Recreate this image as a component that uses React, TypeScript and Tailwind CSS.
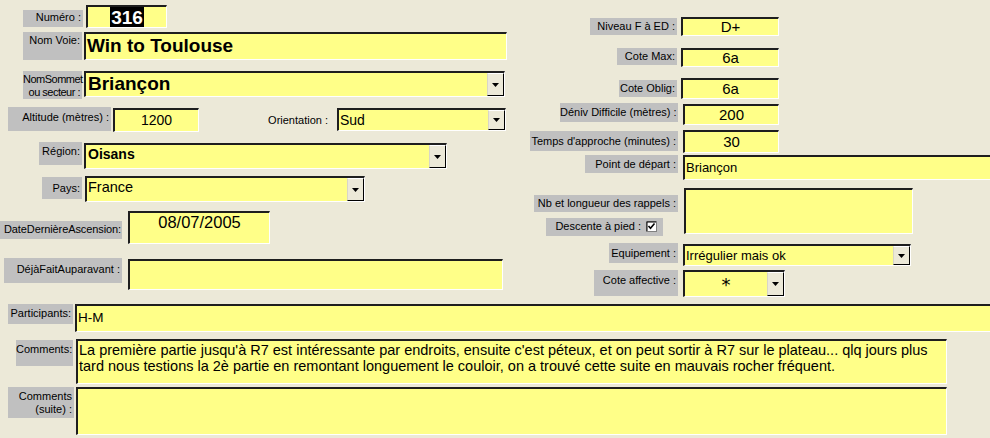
import type { ReactNode } from "react";

type BoxProps = { className?: string; children?: ReactNode };

// libellé gris façon formulaire Access
function Label({ className = "", children }: BoxProps) {
  return (
    <div
      className={`shrink-0 bg-[#c0c0c0] pr-[2px] pt-[2px] text-right text-[11px] leading-[13px] whitespace-nowrap ${className}`}
    >
      {children}
    </div>
  );
}

// zone de saisie jaune, bord enfoncé
function Field({ className = "", children }: BoxProps) {
  return (
    <div
      className={`flex shrink-0 overflow-hidden whitespace-nowrap border-t-2 border-l-2 border-b border-r border-t-[#1e1e1e] border-l-[#1e1e1e] border-b-white border-r-white bg-[#ffff88] ${className}`}
    >
      {children}
    </div>
  );
}

function DropButton() {
  return (
    <div className="ml-auto flex w-[17px] shrink-0 items-center justify-center self-stretch border border-t-white border-l-[#d8d5c8] border-r-black border-b-black bg-[#ece9d8]">
      <svg width="7" height="4" viewBox="0 0 7 4">
        <path d="M0 0h7L3.5 4z" fill="#000" />
      </svg>
    </div>
  );
}

function CheckBox() {
  return (
    <svg width="11" height="11" viewBox="0 0 11 11" className="ml-[5px] mt-[1px] shrink-0">
      <rect x="0.5" y="0.5" width="10" height="10" fill="#fff" stroke="#808080" />
      <path d="M1 1h9M1 1v9" stroke="#000" />
      <path d="M2.5 5l2 2.2L8.5 2.5" stroke="#000" strokeWidth="1.6" fill="none" />
    </svg>
  );
}

export default function App() {
  return (
    <div className="relative h-[438px] w-[990px] overflow-hidden bg-[#ece9d8] font-['Liberation_Sans',Arial,sans-serif] text-black">
      <div className="flex items-start">
        {/* Colonne gauche */}
        <div className="w-[520px] shrink-0 pt-[5px]">
          <div className="flex h-[27px] items-start">
            <Label className="ml-[23px] mt-[5px] h-[17px] w-[60px] !pt-[1px]">Numéro :</Label>
            <Field className="ml-[3px] h-[23px] w-[81px] items-center justify-center">
              <span className="bg-black px-[1px] text-[19px] font-bold leading-[21px] text-white">316</span>
            </Field>
          </div>

          <div className="flex h-[39px] items-start">
            <Label className="ml-[23px] h-[28px] w-[59px] pr-0">Nom Voie:</Label>
            <Field className="ml-[2px] h-[28px] w-[423px] items-center pl-[1px] text-[19px] font-bold">
              Win to Toulouse
            </Field>
          </div>

          <div className="flex h-[36px] items-start">
            <Label className="ml-[23px] h-[28px] w-[59px] text-[10px] leading-[12px] tracking-[-0.5px]">
              NomSommet
              <br />
              ou secteur :
            </Label>
            <Field className="ml-[2px] h-[26px] w-[421px] items-center pl-[2px] text-[19px] font-bold">
              <span>Briançon</span>
              <DropButton />
            </Field>
          </div>

          <div className="flex h-[35px] items-start">
            <Label className="ml-[8px] h-[24px] w-[103px] !pt-[4px]">Altitude (mètres) :</Label>
            <Field className="ml-[2px] mt-[1px] h-[24px] w-[86px] items-center justify-center text-[14px]">
              1200
            </Field>
            <div className="w-[138px] shrink-0 pr-[9px] pt-[7px] text-right text-[11px] leading-[13px]">
              Orientation :
            </div>
            <Field className="mt-[1px] h-[23px] w-[169px] items-center pl-[1px] text-[14px]">
              <span>Sud</span>
              <DropButton />
            </Field>
          </div>

          <div className="flex h-[34px] items-start">
            <Label className="ml-[39px] h-[23px] w-[43px] !pt-[3px]">Région:</Label>
            <Field className="ml-[2px] mt-[1px] h-[26px] w-[363px] pl-[2px] text-[14px] font-bold leading-[17px]">
              <span className="pt-[1px]">Oisans</span>
              <DropButton />
            </Field>
          </div>

          <div className="flex h-[35px] items-start">
            <Label className="ml-[42px] mt-[1px] h-[22px] w-[40px] !pt-[5px]">Pays:</Label>
            <Field className="ml-[3px] h-[26px] w-[280px] pl-[1px] text-[14.5px] leading-[17px]">
              <span className="pt-[1px]">France</span>
              <DropButton />
            </Field>
          </div>

          <div className="flex h-[47px] items-start">
            <Label className="mt-[10px] h-[18px] w-[122px] !pr-[1px] tracking-[-0.1px]">DateDernièreAscension:</Label>
            <Field className="ml-[6px] h-[33px] w-[142px] justify-center text-[16.5px] leading-[19px]">
              08/07/2005
            </Field>
          </div>

          <div className="flex h-[46px] items-start">
            <Label className="ml-[4px] h-[25px] w-[118px] !pt-[5px]">DéjàFaitAuparavant :</Label>
            <Field className="ml-[6px] mt-[1px] h-[31px] w-[375px]" />
          </div>
        </div>

        {/* Colonne droite */}
        <div className="flex-1 pt-[17px]">
          <div className="flex h-[31px] items-start">
            <Label className="ml-[70px] mt-[1px] h-[17px] w-[87px]">Niveau F à ED :</Label>
            <Field className="ml-[4px] h-[19px] w-[98px] items-center justify-center text-[15px]">D+</Field>
          </div>

          <div className="flex h-[30px] items-start">
            <Label className="ml-[97px] h-[17px] w-[60px]">Cote Max:</Label>
            <Field className="ml-[4px] h-[19px] w-[98px] items-center justify-center text-[15px]">6a</Field>
          </div>

          <div className="flex h-[25px] items-start">
            <Label className="ml-[99px] mt-[2px] h-[17px] w-[58px]">Cote Oblig:</Label>
            <Field className="ml-[4px] h-[21px] w-[98px] items-center justify-center text-[15px]">6a</Field>
          </div>

          <div className="flex h-[27px] items-start">
            <Label className="ml-[40px] h-[19px] w-[118px] !pt-[3px]">Déniv Difficile (mètres) :</Label>
            <Field className="ml-[5px] mt-[1px] h-[21px] w-[96px] items-center justify-center text-[15px]">200</Field>
          </div>

          <div className="flex h-[25px] items-start">
            <Label className="ml-[10px] mt-[1px] h-[20px] w-[148px] !pt-[4px]">Temps d'approche (minutes) :</Label>
            <Field className="ml-[5px] h-[23px] w-[96px] items-center justify-center text-[15px]">30</Field>
          </div>

          <div className="flex h-[33px] items-start">
            <Label className="ml-[65px] h-[18px] w-[93px] !pt-[3px]">Point de départ :</Label>
            <Field className="ml-[5px] h-[25px] w-[330px] items-center pl-[1px] text-[13px]">Briançon</Field>
          </div>

          <div className="flex h-[55px] items-start">
            <div className="w-[158px] shrink-0">
              <Label className="ml-[14px] mt-[7px] h-[17px] w-[144px]">Nb et longueur des rappels :</Label>
              <Label className="ml-[26px] mt-[6px] flex h-[18px] w-[117px] items-start justify-end !pr-[6px]">
                <span>Descente à pied :</span>
                <CheckBox />
              </Label>
            </div>
            <Field className="ml-[6px] h-[46px] w-[229px]" />
          </div>

          <div className="flex h-[27px] items-start">
            <Label className="ml-[89px] h-[20px] w-[69px] !pt-[4px]">Equipement :</Label>
            <Field className="ml-[5px] mt-[1px] h-[22px] w-[228px] items-center pl-[1px] text-[13px]">
              <span>Irrégulier mais ok</span>
              <DropButton />
            </Field>
          </div>

          <div className="flex h-[34px] items-start">
            <Label className="ml-[74px] h-[26px] w-[84px] !pt-[4px]">Cote affective :</Label>
            <Field className="ml-[5px] h-[27px] w-[102px] items-center text-[18px]">
              <span className="flex-1 text-center font-['DejaVu_Sans',sans-serif]">*</span>
              <DropButton />
            </Field>
          </div>
        </div>
      </div>

      {/* Bas du formulaire */}
      <div className="flex h-[35px] items-start">
        <Label className="ml-[8px] h-[20px] w-[65px] !pt-[3px]">Participants:</Label>
        <Field className="ml-[2px] h-[28px] w-[930px] items-center pl-[1px] text-[13.5px]">H-M</Field>
      </div>

      <div className="flex h-[48px] items-start">
        <Label className="ml-[16px] mt-[1px] h-[26px] w-[57px] !pt-[3px] text-[10px]">Comments:</Label>
        <Field className="ml-[3px] h-[45px] w-[871px] flex-col pl-[1px] pt-[1px] text-[14.5px] leading-[16px]">
          <span>
            La première partie jusqu'à R7 est intéressante par endroits, ensuite c'est péteux, et on peut sortir à R7 sur
            le plateau... qlq jours plus
          </span>
          <span>tard nous testions la 2è partie en remontant longuement le couloir, on a trouvé cette suite en mauvais rocher fréquent.</span>
        </Field>
      </div>

      <div className="flex items-start">
        <Label className="ml-[8px] h-[31px] w-[66px] !pt-[3px] leading-[12px]">
          Comments
          <br />
          (suite) :
        </Label>
        <Field className="ml-[2px] h-[48px] w-[871px]" />
      </div>
    </div>
  );
}
